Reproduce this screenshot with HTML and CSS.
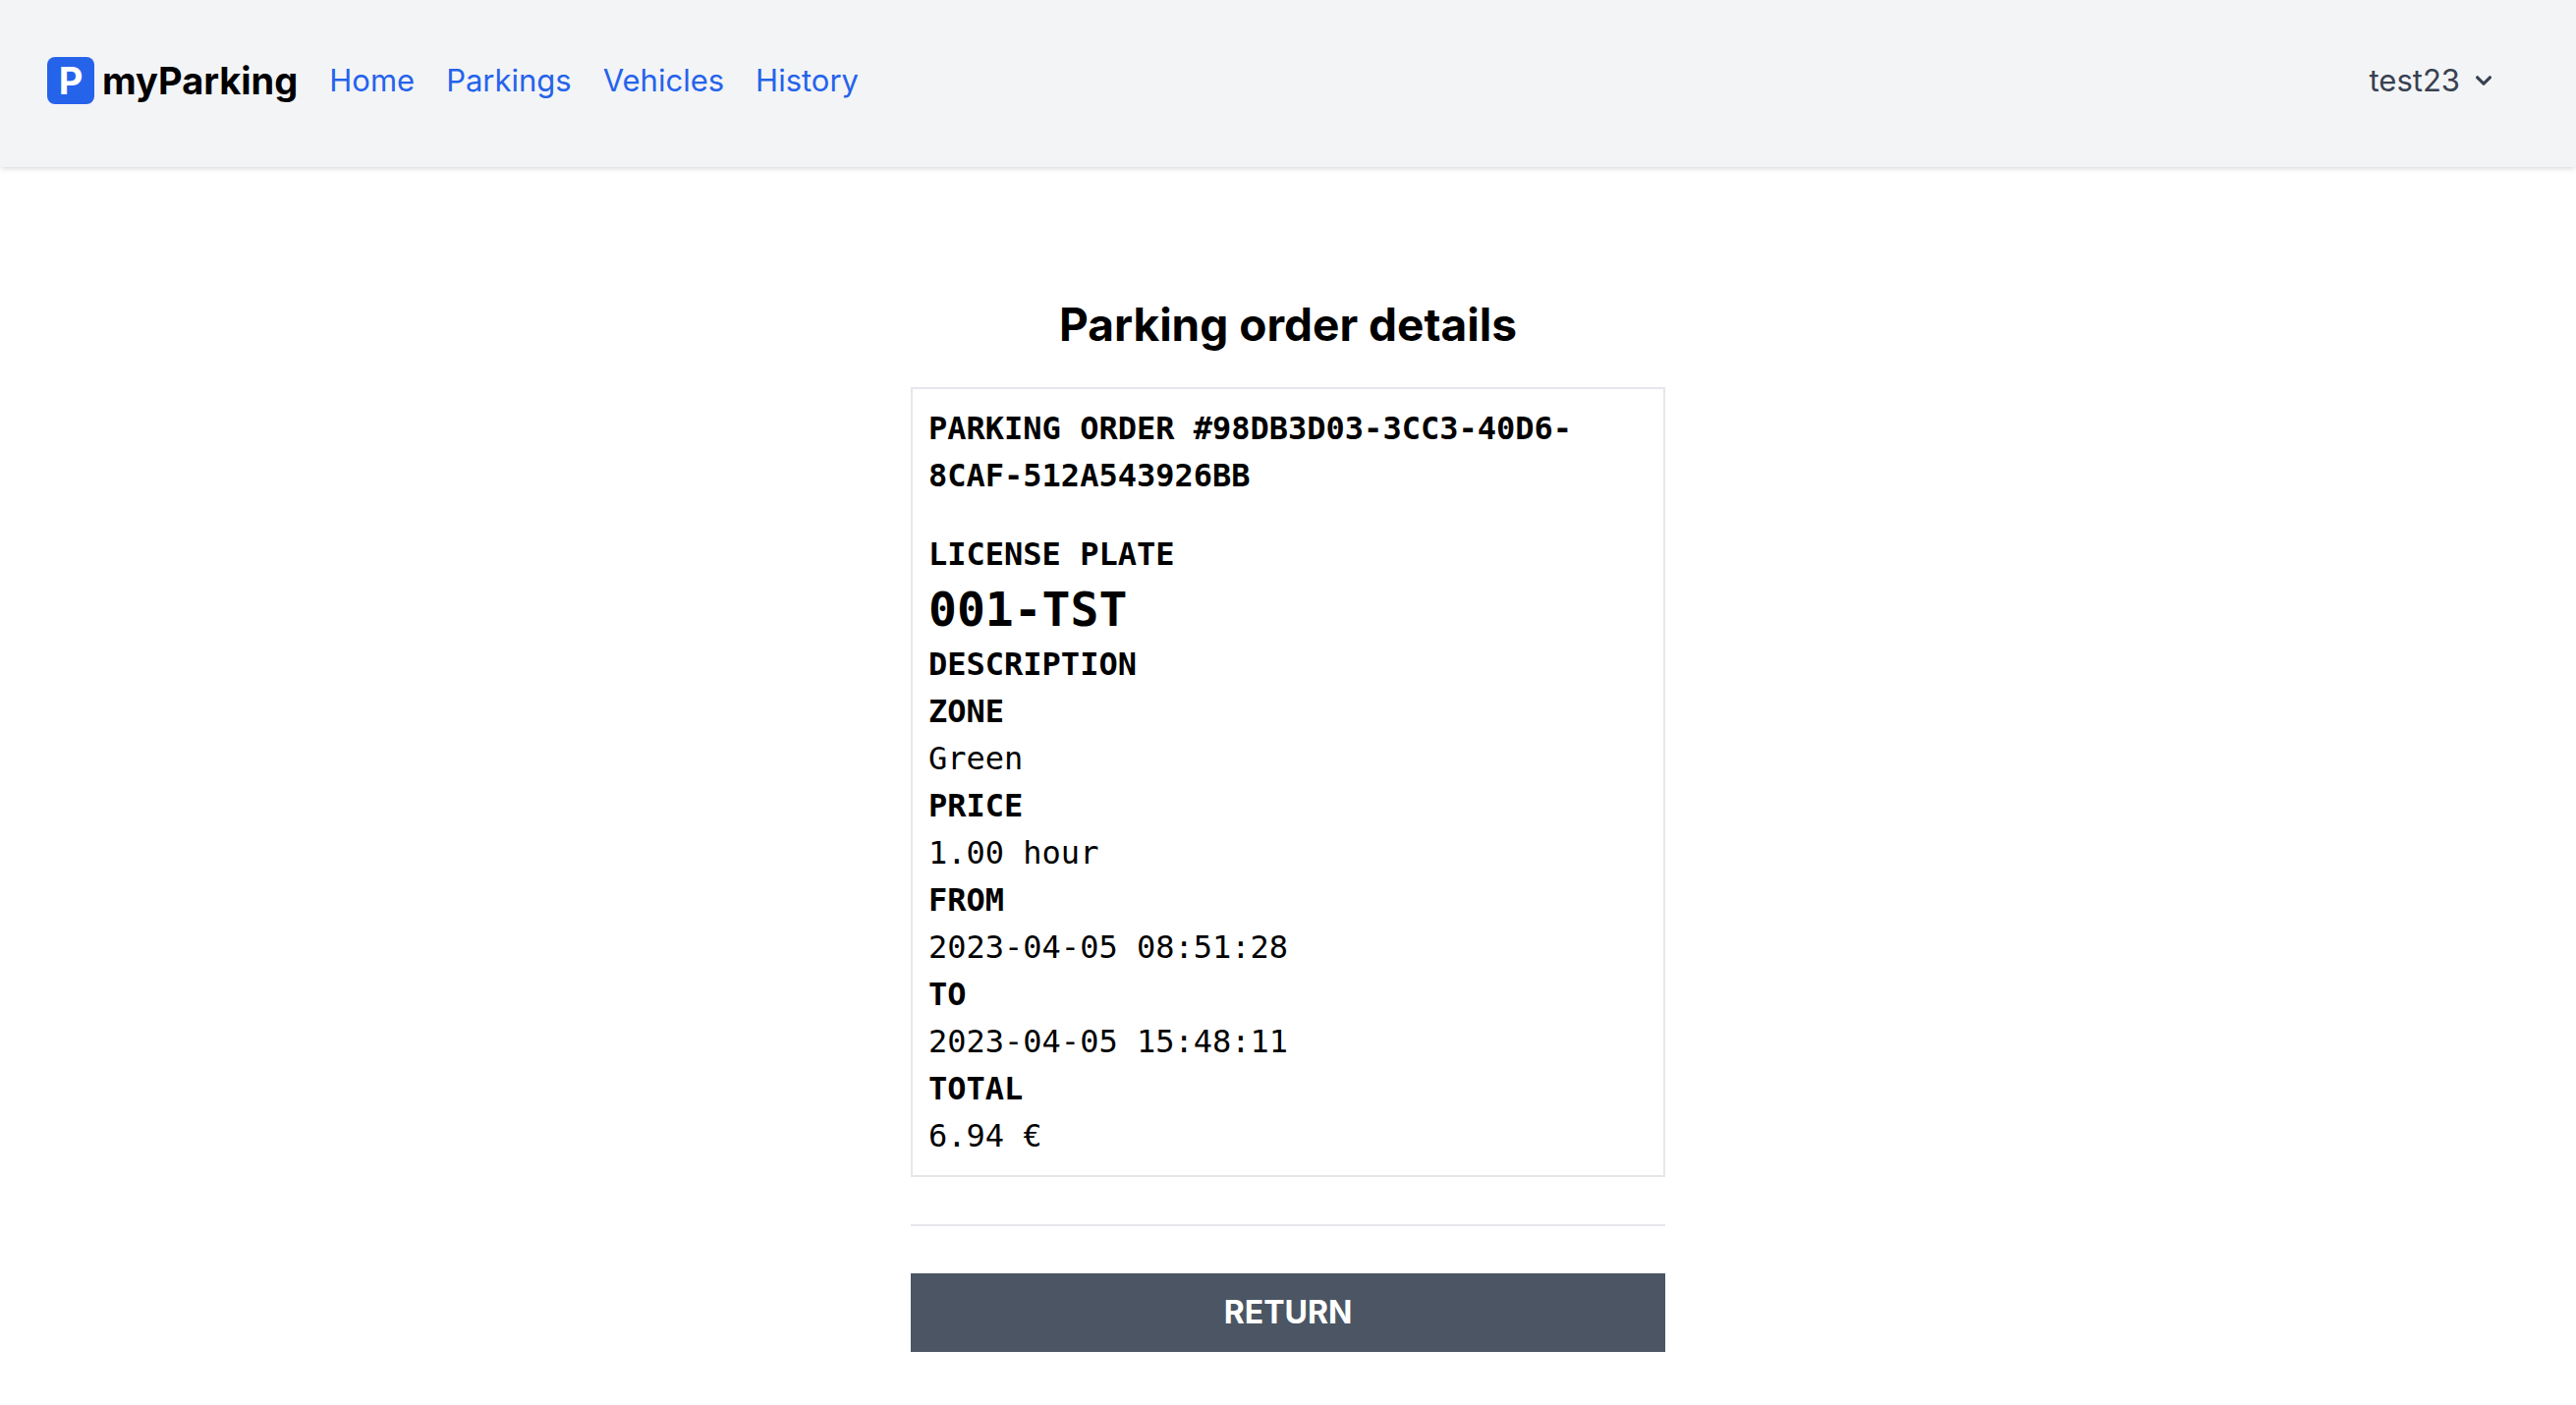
FILE: index.html
```html
<!DOCTYPE html>
<html lang="en">
<head>
  <meta charset="utf-8">
  <meta name="viewport" content="width=device-width, initial-scale=1">
  <title>myParking</title>
  <link rel="stylesheet" href="styles.css">
</head>
<body>
  <header class="header">
    <div class="brand">
      <span class="brand-mark" aria-hidden="true">P</span>
      <span class="brand-name">myParking</span>
    </div>
    <nav class="nav">
      <a class="nav-link" href="#home">Home</a>
      <a class="nav-link" href="#parkings">Parkings</a>
      <a class="nav-link" href="#vehicles">Vehicles</a>
      <a class="nav-link" href="#history">History</a>
    </nav>
    <button class="user-menu" type="button" aria-haspopup="true">
      <span>test23</span>
      <svg class="chevron" viewBox="0 0 20 20" fill="currentColor" aria-hidden="true">
        <path fill-rule="evenodd" clip-rule="evenodd" d="M5.293 7.293a1 1 0 011.414 0L10 10.586l3.293-3.293a1 1 0 111.414 1.414l-4 4a1 1 0 01-1.414 0l-4-4a1 1 0 010-1.414z"/>
      </svg>
    </button>
  </header>
  <main class="order">
    <h1 class="title">Parking order details</h1>
    <section class="receipt">
      <h2 class="receipt-title">parking order #98db3d03-3cc3-40d6-8caf-512a543926bb</h2>
      <dl class="details">
        <dt>license plate</dt>
        <dd class="plate">001-TST</dd>
        <dt>description</dt>
        <dt>zone</dt>
        <dd>Green</dd>
        <dt>price</dt>
        <dd>1.00 hour</dd>
        <dt>from</dt>
        <dd>2023-04-05 08:51:28</dd>
        <dt>to</dt>
        <dd>2023-04-05 15:48:11</dd>
        <dt>total</dt>
        <dd>6.94 €</dd>
      </dl>
    </section>
    <hr class="divider">
    <button class="return" type="button">return</button>
  </main>
</body>
</html>
```
FILE: styles.css
```css
* {
  box-sizing: border-box;
  margin: 0;
  padding: 0;
}

body {
  font-family: Inter, "Liberation Sans", sans-serif;
  font-size: 31px;
  line-height: 48px;
  color: #000;
  background: #fff;
}

.header {
  display: flex;
  align-items: center;
  gap: 32px;
  padding: 58px 78px 64px 48px;
  background: #f3f4f6;
  box-shadow: 0 2px 6px rgba(0, 0, 0, 0.1), 0 2px 4px -2px rgba(0, 0, 0, 0.1);
}

.brand {
  display: flex;
  align-items: center;
  gap: 8px;
  font-size: 38px;
  font-weight: 700;
}

.brand-mark {
  width: 48px;
  border-radius: 8px;
  text-align: center;
  color: #fff;
  background: #2563eb;
}

.nav {
  display: flex;
  gap: 32px;
}

.nav-link {
  color: #2563eb;
  text-decoration: none;
}

.user-menu {
  display: flex;
  align-items: center;
  gap: 8px;
  margin-left: auto;
  border: 0;
  font: inherit;
  color: #374151;
  background: none;
}

.chevron {
  width: 32px;
  height: 32px;
}

.order {
  width: 100%;
  max-width: 768px;
  margin: 0 auto;
  padding: 128px 0 48px;
}

.title {
  margin-bottom: 32px;
  font-size: 46px;
  line-height: 64px;
  text-align: center;
}

.receipt {
  padding: 16px;
  border: 2px solid #e5e7eb;
  font-family: "DejaVu Sans Mono", monospace;
  font-size: 32px;
}

.receipt-title {
  margin-bottom: 32px;
  font-size: 32px;
  text-transform: uppercase;
}

.details dt {
  font-weight: 700;
  text-transform: uppercase;
}

.details .plate {
  font-size: 48px;
  font-weight: 700;
  line-height: 64px;
}

.divider {
  margin: 48px 0;
  border: 0;
  border-top: 2px solid #e5e7eb;
}

.return {
  width: 100%;
  padding: 16px;
  border: 0;
  font: inherit;
  font-size: 32px;
  font-weight: 700;
  text-transform: uppercase;
  color: #fff;
  background: #4b5563;
}
```
